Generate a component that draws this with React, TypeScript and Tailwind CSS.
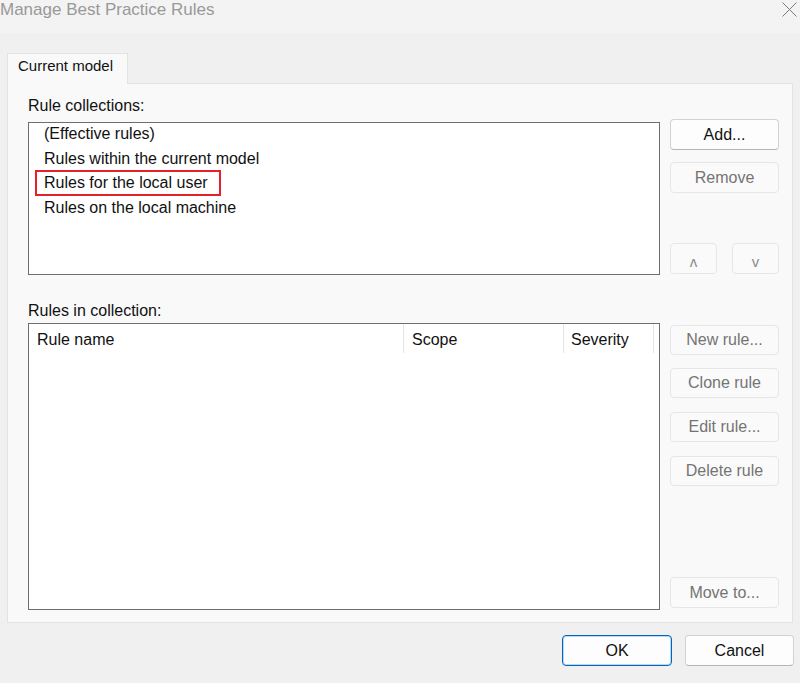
import React from "react";

function Btn({
  label,
  disabled,
  className = "",
  textClass = "",
}: {
  label: string;
  disabled?: boolean;
  className?: string;
  textClass?: string;
}) {
  return (
    <div
      className={
        "flex items-center justify-center rounded-[4px] border text-[16px] leading-[20px] " +
        (disabled
          ? "bg-[#fafafa] border-[#e6e6e6] text-[#747474] "
          : "bg-[#fdfdfd] border-[#d2d2d2] border-b-[#b5b5b5] text-[#111] ") +
        className
      }
    >
      <span className={textClass}>{label}</span>
    </div>
  );
}

export default function App() {
  const collections = [
    "(Effective rules)",
    "Rules within the current model",
    "Rules for the local user",
    "Rules on the local machine",
  ];
  return (
    <div className="w-[800px] h-[683px] bg-[#f0f0f0] flex flex-col overflow-hidden font-['Liberation_Sans',Arial,sans-serif] text-[#111]">
      {/* Title bar */}
      <div className="h-[33px] bg-[#f3f3f3] flex items-start justify-between shrink-0">
        <div className="text-[17px] leading-[20px] text-[#999]">Manage Best Practice Rules</div>
        <svg className="mt-[2px] mr-[3px]" width="15" height="15" viewBox="0 0 15 15">
          <path d="M0.5 0.5 L14.5 14.5 M14.5 0.5 L0.5 14.5" stroke="#7a7a7a" strokeWidth="1" fill="none" />
        </svg>
      </div>

      {/* Tab control */}
      <div className="pl-[7px] pr-[8px] pt-[20px] flex flex-col">
        <div className="relative z-10 -mb-px w-[121px] h-[31px] bg-[#f9f9f9] border border-b-0 border-[#e3e3e3] pl-[10px] pt-[2px] text-[15px] leading-[20px] text-[#111]">
          Current model
        </div>
        <div className="w-[786px] h-[540px] bg-[#f9f9f9] border border-[#e3e3e3] pl-[20px] pt-[12px] flex flex-col">
          <div className="text-[16px] leading-[20px] h-[20px]">Rule collections:</div>
          <div className="flex mt-[6px]">
            <div className="w-[632px] h-[153px] bg-white border border-[#6e6e6e] pl-[15px] pt-[1px] flex flex-col gap-[4.5px]">
              {collections.map((c, i) => (
                <div key={c} className="h-[20px] flex items-center text-[16px] leading-[20px]">
                  {i === 2 ? (
                    <span className="inline-block h-[26px] border-2 border-[#e5202a] ml-[-9px] pl-[7px] pr-[11px] leading-[22px] -mt-[1px]">
                      {c}
                    </span>
                  ) : (
                    c
                  )}
                </div>
              ))}
            </div>
            <div className="ml-[10px] w-[109px] -mt-[3px] h-[156px] flex flex-col">
              <Btn label="Add..." className="h-[31px]" />
              <Btn label="Remove" disabled className="h-[31px] mt-[12px]" />
              <div className="mt-auto mb-[1px] flex justify-between">
                <Btn label="ʌ" disabled className="w-[47px] h-[31px]" textClass="pt-[6px] text-[15px] text-[#8a8a8a]" />
                <Btn label="v" disabled className="w-[47px] h-[31px]" textClass="pt-[6px] text-[15px] text-[#8a8a8a]" />
              </div>
            </div>
          </div>

          <div className="mt-[26px] text-[16px] leading-[20px] h-[20px]">Rules in collection:</div>
          <div className="flex mt-[2px]">
            <div className="w-[632px] h-[287px] bg-white border border-[#6e6e6e] flex flex-col">
              <div className="flex h-[29px] text-[16px] leading-[20px]">
                <div className="w-[375px] border-r border-[#e5e5e5] pl-[8px] pt-[6px]">Rule name</div>
                <div className="w-[160px] border-r border-[#e5e5e5] pl-[8px] pt-[6px]">Scope</div>
                <div className="w-[90px] border-r border-[#e5e5e5] pl-[7px] pt-[6px]">Severity</div>
              </div>
            </div>
            <div className="ml-[10px] w-[109px] h-[287px] flex flex-col">
              <Btn label="New rule..." disabled className="h-[30px] mt-[2px]" />
              <Btn label="Clone rule" disabled className="h-[30px] mt-[13px]" />
              <Btn label="Edit rule..." disabled className="h-[30px] mt-[14px]" />
              <Btn label="Delete rule" disabled className="h-[30px] mt-[14px]" />
              <Btn label="Move to..." disabled className="h-[31px] mt-auto mb-[2px]" />
            </div>
          </div>
        </div>
      </div>

      {/* Bottom buttons */}
      <div className="flex justify-end gap-[13px] pr-[6px] mt-[12px]">
        <div className="w-[110px] h-[31px] flex items-center justify-center rounded-[4px] border border-[#0067c0] shadow-[inset_0_0_0_1px_#b9d6f2] bg-[#fdfdfd] text-[16px] leading-[20px] text-[#111]">
          OK
        </div>
        <Btn label="Cancel" className="w-[109px] h-[31px]" />
      </div>
    </div>
  );
}
